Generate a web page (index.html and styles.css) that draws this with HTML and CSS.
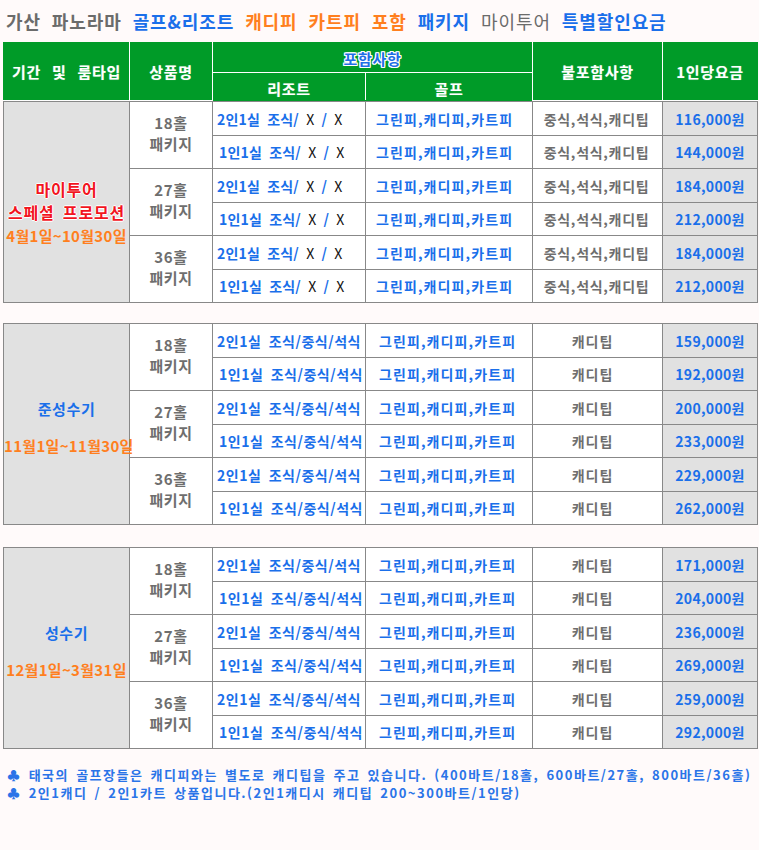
FILE: index.html
```html
<!DOCTYPE html>
<html lang="ko">
<head>
<meta charset="utf-8">
<title>가산 파노라마 골프&amp;리조트 패키지</title>
<link rel="stylesheet" href="styles.css">
</head>
<body>
<div class="page">
  <h1 class="title"><span class="t-gray">가산 파노라마</span> <span class="t-blue">골프&amp;리조트</span> <span class="t-orange">캐디피 카트피 포함</span> <span class="t-blue">패키지</span> <span class="t-gray t-light">마이투어</span> <span class="t-blue">특별할인요금</span></h1>

  <table class="grid head">
    <colgroup><col class="c1"><col class="c2"><col class="c3"><col class="c4"><col class="c5"><col class="c6"></colgroup>
    <tr class="h1">
      <th rowspan="2" class="ws">기간 및 룸타입</th>
      <th rowspan="2">상품명</th>
      <th colspan="2" class="incl">포함사항</th>
      <th rowspan="2">불포함사항</th>
      <th rowspan="2">1인당요금</th>
    </tr>
    <tr class="h2">
      <th>리조트</th>
      <th>골프</th>
    </tr>
  </table>

  <table class="grid body s1">
    <colgroup><col class="c1"><col class="c2"><col class="c3"><col class="c4"><col class="c5"><col class="c6"></colgroup>
    <tr class="ra">
      <td rowspan="6" class="period"><div class="promo">마이투어<br>스페셜 프로모션</div><div class="dates">4월1일~10월30일</div></td>
      <td rowspan="2" class="pkg">18홀<br>패키지</td>
      <td class="resort">2인1실 조식/ <span class="x">X</span> / <span class="x">X</span></td>
      <td class="golf">그린피,캐디피,카트피</td>
      <td class="excl">중식,석식,캐디팁</td>
      <td class="price">116,000원</td>
    </tr>
    <tr class="rb">
      <td class="resort r1">1인1실 조식/ <span class="x">X</span> / <span class="x">X</span></td>
      <td class="golf">그린피,캐디피,카트피</td>
      <td class="excl">중식,석식,캐디팁</td>
      <td class="price">144,000원</td>
    </tr>
    <tr class="ra">
      <td rowspan="2" class="pkg">27홀<br>패키지</td>
      <td class="resort">2인1실 조식/ <span class="x">X</span> / <span class="x">X</span></td>
      <td class="golf">그린피,캐디피,카트피</td>
      <td class="excl">중식,석식,캐디팁</td>
      <td class="price">184,000원</td>
    </tr>
    <tr class="rb">
      <td class="resort r1">1인1실 조식/ <span class="x">X</span> / <span class="x">X</span></td>
      <td class="golf">그린피,캐디피,카트피</td>
      <td class="excl">중식,석식,캐디팁</td>
      <td class="price">212,000원</td>
    </tr>
    <tr class="ra">
      <td rowspan="2" class="pkg">36홀<br>패키지</td>
      <td class="resort">2인1실 조식/ <span class="x">X</span> / <span class="x">X</span></td>
      <td class="golf">그린피,캐디피,카트피</td>
      <td class="excl">중식,석식,캐디팁</td>
      <td class="price">184,000원</td>
    </tr>
    <tr class="rb">
      <td class="resort r1">1인1실 조식/ <span class="x">X</span> / <span class="x">X</span></td>
      <td class="golf">그린피,캐디피,카트피</td>
      <td class="excl">중식,석식,캐디팁</td>
      <td class="price">212,000원</td>
    </tr>
  </table>

  <table class="grid body s2">
    <colgroup><col class="c1"><col class="c2"><col class="c3"><col class="c4"><col class="c5"><col class="c6"></colgroup>
    <tr class="ra">
      <td rowspan="6" class="period"><div class="season">준성수기</div><div class="dates">11월1일~11월30일</div></td>
      <td rowspan="2" class="pkg">18홀<br>패키지</td>
      <td class="resort">2인1실 조식/중식/석식</td>
      <td class="golf g2">그린피,캐디피,카트피</td>
      <td class="excl">캐디팁</td>
      <td class="price">159,000원</td>
    </tr>
    <tr class="rb">
      <td class="resort r1">1인1실 조식/중식/석식</td>
      <td class="golf g2">그린피,캐디피,카트피</td>
      <td class="excl">캐디팁</td>
      <td class="price">192,000원</td>
    </tr>
    <tr class="ra">
      <td rowspan="2" class="pkg">27홀<br>패키지</td>
      <td class="resort">2인1실 조식/중식/석식</td>
      <td class="golf g2">그린피,캐디피,카트피</td>
      <td class="excl">캐디팁</td>
      <td class="price">200,000원</td>
    </tr>
    <tr class="rb">
      <td class="resort r1">1인1실 조식/중식/석식</td>
      <td class="golf g2">그린피,캐디피,카트피</td>
      <td class="excl">캐디팁</td>
      <td class="price">233,000원</td>
    </tr>
    <tr class="ra">
      <td rowspan="2" class="pkg">36홀<br>패키지</td>
      <td class="resort">2인1실 조식/중식/석식</td>
      <td class="golf g2">그린피,캐디피,카트피</td>
      <td class="excl">캐디팁</td>
      <td class="price">229,000원</td>
    </tr>
    <tr class="rb">
      <td class="resort r1">1인1실 조식/중식/석식</td>
      <td class="golf g2">그린피,캐디피,카트피</td>
      <td class="excl">캐디팁</td>
      <td class="price">262,000원</td>
    </tr>
  </table>

  <table class="grid body s3">
    <colgroup><col class="c1"><col class="c2"><col class="c3"><col class="c4"><col class="c5"><col class="c6"></colgroup>
    <tr class="ra">
      <td rowspan="6" class="period"><div class="season">성수기</div><div class="dates">12월1일~3월31일</div></td>
      <td rowspan="2" class="pkg">18홀<br>패키지</td>
      <td class="resort">2인1실 조식/중식/석식</td>
      <td class="golf g2">그린피,캐디피,카트피</td>
      <td class="excl">캐디팁</td>
      <td class="price">171,000원</td>
    </tr>
    <tr class="rb">
      <td class="resort r1">1인1실 조식/중식/석식</td>
      <td class="golf g2">그린피,캐디피,카트피</td>
      <td class="excl">캐디팁</td>
      <td class="price">204,000원</td>
    </tr>
    <tr class="ra">
      <td rowspan="2" class="pkg">27홀<br>패키지</td>
      <td class="resort">2인1실 조식/중식/석식</td>
      <td class="golf g2">그린피,캐디피,카트피</td>
      <td class="excl">캐디팁</td>
      <td class="price">236,000원</td>
    </tr>
    <tr class="rb">
      <td class="resort r1">1인1실 조식/중식/석식</td>
      <td class="golf g2">그린피,캐디피,카트피</td>
      <td class="excl">캐디팁</td>
      <td class="price">269,000원</td>
    </tr>
    <tr class="ra">
      <td rowspan="2" class="pkg">36홀<br>패키지</td>
      <td class="resort">2인1실 조식/중식/석식</td>
      <td class="golf g2">그린피,캐디피,카트피</td>
      <td class="excl">캐디팁</td>
      <td class="price">259,000원</td>
    </tr>
    <tr class="rb">
      <td class="resort r1">1인1실 조식/중식/석식</td>
      <td class="golf g2">그린피,캐디피,카트피</td>
      <td class="excl">캐디팁</td>
      <td class="price">292,000원</td>
    </tr>
  </table>

  <div class="notes">
    <p>♣ 태국의 골프장들은 캐디피와는 별도로 캐디팁을 주고 있습니다. (400바트/18홀, 600바트/27홀, 800바트/36홀)</p>
    <p>♣ 2인1캐디 / 2인1카트 상품입니다.(2인1캐디시 캐디팁 200~300바트/1인당)</p>
  </div>
</div>
</body>
</html>
```

FILE: styles.css
```css
html, body {
  margin: 0;
  padding: 0;
  background: #fffafa;
}

body {
  font-family: "Noto Sans CJK KR", "Noto Sans", sans-serif;
  color: #666;
}

.page {
  padding: 0 2px 0 3px;
}

.title {
  margin: 0;
  height: 42px;
  line-height: 43px;
  padding-left: 3px;
  font-size: 18px;
  font-weight: bold;
  letter-spacing: 0.9px;
  word-spacing: 5px;
  white-space: nowrap;
}

.t-gray { color: #6b6b6b; }
.t-light { font-weight: normal; }
.t-blue { color: #1a6fea; }
.t-orange { color: #ff7f1e; }

.grid {
  width: 754px;
  table-layout: fixed;
  border-collapse: collapse;
}

.c1 { width: 126px; }
.c2 { width: 83px; }
.c3 { width: 153px; }
.c4 { width: 167px; }
.c5 { width: 130px; }
.c6 { width: 95px; }

/* header */
.head th {
  background: #009b28;
  color: #fff;
  font-size: 15px;
  font-weight: bold;
  letter-spacing: 0.7px;
  border: 1px solid #fff;
  padding: 0;
  text-align: center;
  vertical-align: middle;
  text-shadow: 0 0 1px rgba(255,255,255,0.4);
}

.head tr:first-child th { border-top-color: #009b28; }
.head tr:first-child th:first-child { border-left-color: #009b28; }
.head tr:first-child th:last-child { border-right-color: #009b28; }
.head .h2 th { border-bottom-color: #009b28; padding-top: 3px; }
.head .h1 { height: 30px; }
.head .h2 { height: 28px; }
.head .ws { word-spacing: 6px; }

.head .incl {
  color: #1f6fe6;
  font-size: 15px;
  padding-top: 2px;
  text-shadow:
    1px 0 0 #fff, -1px 0 0 #fff, 0 1px 0 #fff, 0 -1px 0 #fff,
    1px 1px 0 #fff, -1px -1px 0 #fff, 1px -1px 0 #fff, -1px 1px 0 #fff;
}

/* body */
.body td {
  border: 1px solid #888;
  background: #fff;
  padding: 0;
  font-size: 14px;
  font-weight: bold;
  vertical-align: middle;
  text-align: center;
  white-space: nowrap;
}

.body .ra { height: 34px; }
.body .rb { height: 33px; }

.s2 { margin-top: 20px; }
.s3 { margin-top: 22px; }

.body .period {
  background: #e1e1e1;
  line-height: 23px;
}

.promo {
  color: #f2141e;
  font-size: 16px;
  letter-spacing: 0.8px;
  word-spacing: 3px;
  padding-top: 20px;
  text-shadow:
    1px 0 0 #fff, -1px 0 0 #fff, 0 1px 0 #fff, 0 -1px 0 #fff;
}

.dates {
  color: #ff7f1e;
  font-size: 15px;
  letter-spacing: 0.3px;
}

.season {
  color: #1a6fea;
  font-size: 15px;
  letter-spacing: 0.6px;
  margin-bottom: 14px;
  padding-top: 6px;
}

.body .pkg {
  color: #6e6e6e;
  font-size: 15px;
  line-height: 21px;
  letter-spacing: 0.6px;
  padding-bottom: 4px;
}

.body .resort {
  color: #1a6fea;
  text-align: left;
  padding-left: 4px;
  word-spacing: 3px;
  letter-spacing: 0.5px;
}

.s1 .resort { letter-spacing: 0.2px; }

.body .resort.r1 { padding-left: 6px; }

.x {
  color: #111;
  font-weight: normal;
}

.body .golf {
  color: #1a6fea;
  text-align: left;
  padding-left: 10px;
  letter-spacing: 1.1px;
}

.body .golf.g2 { padding-left: 13px; }

.body .excl {
  color: #6e6e6e;
  letter-spacing: 0.7px;
}

.s1 .excl { padding-right: 2px; }
.s2 .excl, .s3 .excl { padding-right: 10px; letter-spacing: 1px; }

.body .price {
  background: #e1e1e1;
  color: #1a6fea;
  letter-spacing: 0.3px;
}

.notes {
  padding: 17px 0 0 4px;
  color: #2a74e8;
  font-size: 13px;
  font-weight: bold;
  letter-spacing: 1.5px;
  word-spacing: 2px;
  line-height: 18px;
}

.notes p {
  margin: 0;
  white-space: nowrap;
}
```
